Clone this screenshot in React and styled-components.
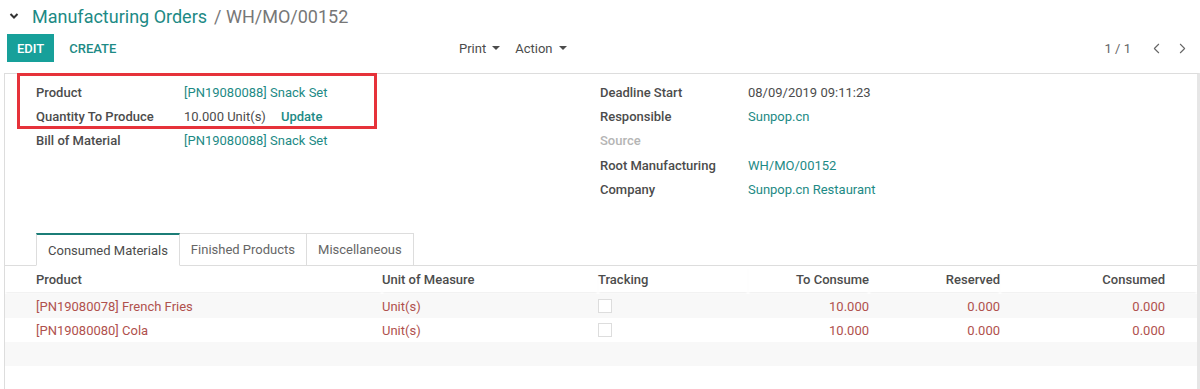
import React from "react";
import styled, { createGlobalStyle } from "styled-components";
import { ChevronLeft, ChevronRight } from "lucide-react";

const Global = createGlobalStyle`
  body {
    margin: 0;
    background: #fff;
    font-family: Roboto, "Liberation Sans", sans-serif;
    font-size: 13px;
    color: #4c4c4c;
  }
`;

const Page = styled.div`
  width: 1200px;
  height: 389px;
  overflow: hidden;
  display: flex;
  flex-direction: column;
`;

const ControlPanel = styled.div`
  padding: 4px 5px 0 7px;
  height: 73px;
  box-sizing: border-box;
  display: grid;
  grid-template-columns: 1fr 1fr 1fr;
  grid-template-rows: 24px 33px;
  row-gap: 6px;
`;

const Breadcrumb = styled.div`
  grid-column: 1 / 4;
  display: flex;
  align-items: center;
  font-size: 18px;
  padding-left: 2px;
`;

const Crumb = styled.span`
  color: #1d8a85;
  margin-left: 13px;
`;

const Current = styled.span`
  color: #777;
  margin-left: 7px;
`;

const Buttons = styled.div`
  display: flex;
  align-items: center;
  gap: 14px;
  align-self: start;
`;

const Button = styled.button`
  font-family: inherit;
  font-size: 13px;
  font-weight: 500;
  text-transform: uppercase;
  height: 28px;
  padding: 0 ${(p) => (p.$primary ? "10px" : "1px")};
  border: none;
  border-radius: 0;
  background: ${(p) => (p.$primary ? "#17a09a" : "transparent")};
  color: ${(p) => (p.$primary ? "#fff" : "#1d8a85")};
`;

const Dropdowns = styled.div`
  display: flex;
  align-items: center;
  gap: 15px;
  padding-left: 56px;
  align-self: start;
  height: 28px;
`;

const Dropdown = styled.span`
  display: flex;
  align-items: center;
  gap: 6px;
  color: #4c4c4c;
  &::after {
    content: "";
    border-left: 4px solid transparent;
    border-right: 4px solid transparent;
    border-top: 4px solid #4c4c4c;
  }
`;

const Pager = styled.div`
  justify-self: end;
  display: flex;
  align-items: center;
  height: 28px;
  color: #666;
  align-self: start;
`;

const PagerValue = styled.span`
  margin-right: 12px;
`;

const PagerBtn = styled.span`
  display: flex;
  width: 26px;
  justify-content: center;
  color: #666;
`;

const Sheet = styled.div`
  position: relative;
  flex: 1;
  margin: 0 0 0 4px;
  border-top: 1px solid #ddd;
  border-left: 1px solid #ddd;
  border-right: 3px solid #e6e6e6;
  background: #fff;
`;

const Highlight = styled.div`
  position: absolute;
  left: 12px;
  top: -1px;
  width: 360px;
  height: 56px;
  box-sizing: border-box;
  border: 3px solid #e6323a;
`;

const Groups = styled.div`
  display: grid;
  grid-template-columns: 564px 1fr;
  padding: 6px 32px 0 31px;
`;

const FieldGrid = styled.div`
  display: grid;
  grid-template-columns: 148px 1fr;
  grid-auto-rows: 24.3px;
  align-items: center;
`;

const Label = styled.div`
  font-weight: 500;
  color: ${(p) => (p.$muted ? "#b5b5b5" : "#4c4c4c")};
`;

const Value = styled.div`
  color: ${(p) => (p.$link ? "#1d8a85" : "#4c4c4c")};
  display: flex;
  gap: 15px;
`;

const UpdateLink = styled.span`
  color: #1d8a85;
  font-weight: 500;
`;

const TabBar = styled.div`
  display: flex;
  margin-top: 32px;
  padding-left: 31px;
  border-bottom: 1px solid #ddd;
  height: 32px;
`;

const Tab = styled.div`
  padding: 0 11px;
  display: flex;
  align-items: center;
  margin-bottom: -1px;
  border: 1px solid #ddd;
  border-left-width: ${(p) => (p.$first ? "1px" : "0")};
  border-top: ${(p) => (p.$active ? "2px solid #1b7d77" : "1px solid #ddd")};
  border-bottom: ${(p) => (p.$active ? "1px solid #fff" : "1px solid #ddd")};
  background: #fff;
  color: ${(p) => (p.$active ? "#4c4c4c" : "#666")};
`;

const Table = styled.div`
  display: grid;
  grid-template-columns: 377px 216px 150px 121px 131px 197px;
`;

const HeadCell = styled.div`
  height: 26px;
  display: flex;
  align-items: center;
  justify-content: ${(p) => (p.$right ? "flex-end" : "flex-start")};
  font-weight: 500;
  color: #4c4c4c;
  box-shadow: 0 2px 2px -1px rgba(0, 0, 0, 0.08);
  margin-bottom: 2px;
  &:first-child { padding-left: 31px; }
  &:nth-child(6) { padding-right: 32px; }
`;

const Row = styled.div`
  display: contents;
  & > div {
    background: ${(p) => (p.$striped ? "#f8f8f8" : "#fff")};
  }
  & > div:first-child { padding-left: 31px; }
  & > div:last-child { padding-right: 32px; }
`;

const Cell = styled.div`
  height: 24px;
  display: flex;
  align-items: center;
  justify-content: ${(p) => (p.$right ? "flex-end" : "flex-start")};
  color: #b0514d;
`;

const Check = styled.span`
  width: 12px;
  height: 12px;
  border: 1px solid #ddd;
  background: #fff;
`;

const Chevron = () => (
  <svg width="10" height="8" viewBox="0 0 10 8">
    <polyline points="1.5,2 5,5.5 8.5,2" fill="none" stroke="#333" strokeWidth="2" />
  </svg>
);

const lines = [
  { product: "[PN19080078] French Fries", uom: "Unit(s)", toConsume: "10.000", reserved: "0.000", consumed: "0.000" },
  { product: "[PN19080080] Cola", uom: "Unit(s)", toConsume: "10.000", reserved: "0.000", consumed: "0.000" },
];

export default function App() {
  return (
    <Page>
      <Global />
      <ControlPanel>
        <Breadcrumb>
          <Chevron />
          <Crumb>Manufacturing Orders</Crumb>
          <Current>/ WH/MO/00152</Current>
        </Breadcrumb>
        <Buttons>
          <Button $primary>Edit</Button>
          <Button>Create</Button>
        </Buttons>
        <Dropdowns>
          <Dropdown>Print</Dropdown>
          <Dropdown>Action</Dropdown>
        </Dropdowns>
        <Pager>
          <PagerValue>1 / 1</PagerValue>
          <PagerBtn><ChevronLeft size={17} strokeWidth={1.5} /></PagerBtn>
          <PagerBtn><ChevronRight size={17} strokeWidth={1.5} /></PagerBtn>
        </Pager>
      </ControlPanel>

      <Sheet>
        <Groups>
          <FieldGrid>
            <Label>Product</Label>
            <Value $link>[PN19080088] Snack Set</Value>
            <Label>Quantity To Produce</Label>
            <Value>10.000 Unit(s) <UpdateLink>Update</UpdateLink></Value>
            <Label>Bill of Material</Label>
            <Value $link>[PN19080088] Snack Set</Value>
          </FieldGrid>
          <FieldGrid>
            <Label>Deadline Start</Label>
            <Value>08/09/2019 09:11:23</Value>
            <Label>Responsible</Label>
            <Value $link>Sunpop.cn</Value>
            <Label $muted>Source</Label>
            <Value />
            <Label>Root Manufacturing</Label>
            <Value $link>WH/MO/00152</Value>
            <Label>Company</Label>
            <Value $link>Sunpop.cn Restaurant</Value>
          </FieldGrid>
        </Groups>

        <TabBar>
          <Tab $active $first>Consumed Materials</Tab>
          <Tab>Finished Products</Tab>
          <Tab>Miscellaneous</Tab>
        </TabBar>

        <Table>
          <HeadCell>Product</HeadCell>
          <HeadCell>Unit of Measure</HeadCell>
          <HeadCell>Tracking</HeadCell>
          <HeadCell $right>To Consume</HeadCell>
          <HeadCell $right>Reserved</HeadCell>
          <HeadCell $right>Consumed</HeadCell>
          {lines.map((l, i) => (
            <Row key={i} $striped={i % 2 === 0}>
              <Cell>{l.product}</Cell>
              <Cell>{l.uom}</Cell>
              <Cell><Check /></Cell>
              <Cell $right>{l.toConsume}</Cell>
              <Cell $right>{l.reserved}</Cell>
              <Cell $right>{l.consumed}</Cell>
            </Row>
          ))}
          <Row $striped>
            <Cell /><Cell /><Cell /><Cell /><Cell /><Cell />
          </Row>
        </Table>

        <Highlight />
      </Sheet>
    </Page>
  );
}
